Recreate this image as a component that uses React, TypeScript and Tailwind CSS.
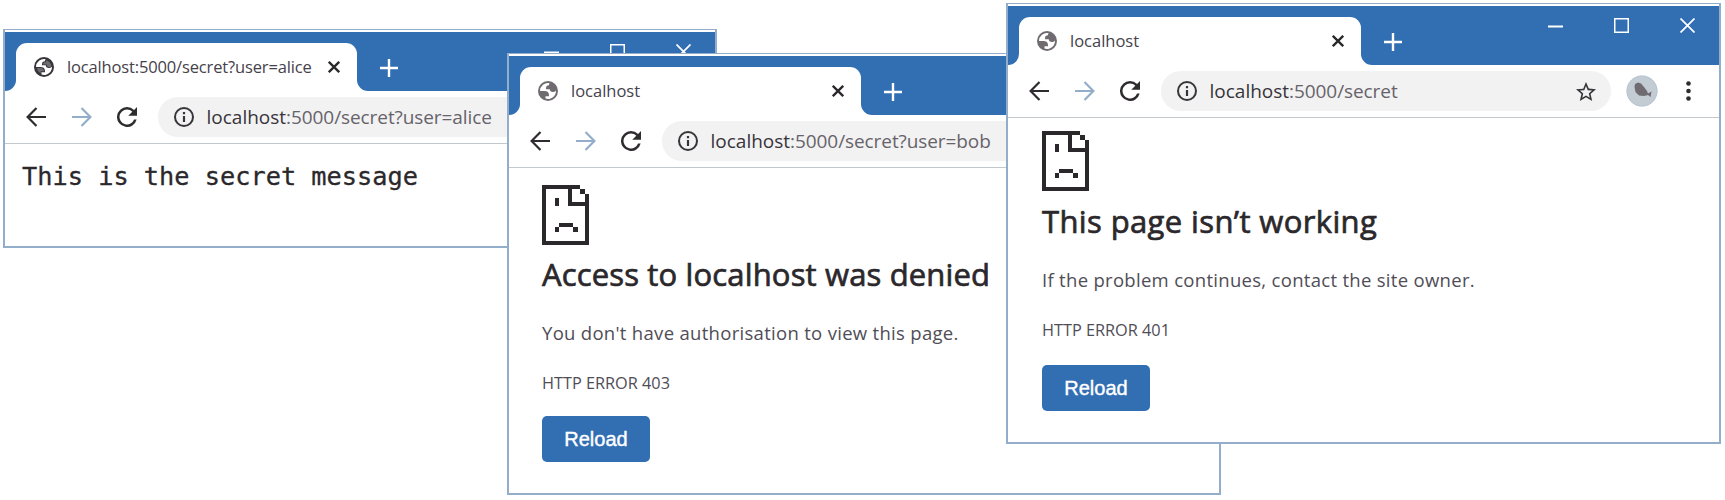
import React from "react";

const SANS = "font-['Open_Sans','Noto_Sans',sans-serif]";

function Globe({ dark }: { dark?: boolean }) {
  return (
    <svg viewBox="2 2 20 20" className={`h-5 w-5 shrink-0 ${dark ? "text-[#37343a]" : "text-[#6f6b71]"}`}>
      <circle cx="12" cy="12" r="10" fill="currentColor" />
      <path
        fill="#fff"
        d="M4 12h4.400c3.407.022 4.922 1.730 4.543 5.127H9.488v2.470a8.004 8.004 0 0 0 10.498-8.083C19.327 12.504 18.332 13 17 13c-2.137 0-3.206-.916-3.206-2.750h-3.748c-.274-2.728.683-4.092 2.870-4.092 0-.975.327-1.597.811-1.970A8.004 8.004 0 0 0 4 12z"
      />
      {dark && <path fill="#6f6b71" d="M14.500 5.200A8 8 0 0 1 19.500 11Q18.500 12.300 17 12.200Q14.800 12 14.600 9.500H11Q11 7 13.700 7ZM4.800 13H8.500Q12 13.200 12 16.300H8.700V18.500A8 8 0 0 1 4.800 13Z" />}
    </svg>
  );
}

function SadPage() {
  return (
    <svg viewBox="0 0 47 60" className="block h-[60px] w-[47px]" fill="#2b282c">
      <path d="M0 0H38V4H0ZM0 0H4V60H0ZM0 56H47V60H0ZM43 9H47V60H43ZM26 0H30V21H26ZM26 17H47V21H26ZM38 4H43V9H38ZM13 13H17V21H13ZM17 38H31V42H17ZM13 42H17V47H13ZM31 42H36V47H31Z" />
    </svg>
  );
}

function Back({ flip, className }: { flip?: boolean; className: string }) {
  return (
    <svg viewBox="0 0 20 20" className={`h-5 w-5 shrink-0 ${flip ? "-scale-x-100" : ""} ${className}`} fill="none" stroke="currentColor" strokeWidth="2.200">
      <path d="M20 10H2M10.500 1L1.600 10L10.500 19" />
    </svg>
  );
}

function Reload() {
  return (
    <svg viewBox="4 4 16 16" className="h-5 w-5 shrink-0 text-[#2f2c30]" fill="currentColor">
      <path d="M17.650 6.350A7.958 7.958 0 0 0 12 4a8 8 0 1 0 7.730 10h-2.080A6 6 0 1 1 12 6c1.660 0 3.140.690 4.220 1.780L13 11h7V4z" />
    </svg>
  );
}

function Info() {
  return (
    <svg viewBox="0 0 20 20" className="h-5 w-5 shrink-0 text-[#37343a]" fill="none" stroke="currentColor" strokeWidth="2">
      <circle cx="10" cy="10" r="9" />
      <path d="M10 9V15M10 5V7.200" strokeWidth="2.200" />
    </svg>
  );
}

type WindowProps = {
  place: string;
  tab: string;
  title: string;
  host: string;
  rest: string;
  dark?: boolean;
  children: React.ReactNode;
};

function BrowserWindow({ place, tab, title, host, rest, dark, children }: WindowProps) {
  return (
    <section className={`absolute flex flex-col border-2 border-t border-[#93aeca] bg-white ${place}`}>
      <header className="mt-[2px] flex h-[59px] shrink-0 bg-[#316eb2] text-white">
        <div className="flex w-[11px] shrink-0 items-end bg-white">
          <div className="h-full w-full rounded-br-[11px] bg-[#316eb2]" />
        </div>
        <div className={`flex shrink-0 flex-col bg-[#316eb2] pt-[11px] ${tab}`}>
          <div className="flex h-12 items-center rounded-t-[11px] bg-white pl-[18px] pr-[17px]">
            <Globe dark={dark} />
            <span className={`ml-[13px] grow whitespace-nowrap text-[16.500px] leading-6 text-[#45424b] ${dark ? "tracking-[-0.15px]" : ""} ${SANS}`}>{title}</span>
            <svg viewBox="0 0 12 12" className="h-3 w-3 shrink-0" stroke="#2b282c" strokeWidth="2.300">
              <path d="M.8 .8L11.200 11.200M11.200 .8L.8 11.200" />
            </svg>
          </div>
        </div>
        <div className="flex grow bg-white">
          <div className="flex grow justify-between rounded-bl-[11px] bg-[#316eb2] pl-[22.500px] pr-[24px]">
            <svg viewBox="0 0 18 18" className="mt-[26.500px] h-[18px] w-[18px]" stroke="currentColor" strokeWidth="2.400">
              <path d="M9 0V18M0 9H18" />
            </svg>
            <div className="mt-3 flex gap-[51px]">
              <svg viewBox="0 0 15 15" className="h-[15px] w-[15px]" stroke="currentColor" strokeWidth="2"><path d="M0 8.500H15" /></svg>
              <svg viewBox="0 0 15 15" className="h-[15px] w-[15px]" stroke="currentColor" strokeWidth="1.500" fill="none"><path d="M.75 .75H14.250V14.250H.75Z" /></svg>
              <svg viewBox="0 0 15 15" className="h-[15px] w-[15px]" stroke="currentColor" strokeWidth="1.700"><path d="M.5 .5L14.500 14.500M14.500 .5L.5 14.500" /></svg>
            </div>
          </div>
        </div>
      </header>
      <nav className="flex h-[53px] shrink-0 items-center border-b border-[#c3c8cc] pl-[20.500px] pr-[28px]">
        <Back className="text-[#2f2c30]" />
        <Back flip className="ml-[26px] text-[#93aeca]" />
        <div className="ml-[25.500px] flex"><Reload /></div>
        <div className="ml-[21px] flex h-10 grow items-center rounded-full bg-[#f2f2f2] pl-[15.500px] pr-[15.500px]">
          <Info />
          <span className={`ml-[13px] grow whitespace-nowrap text-[19px] leading-7 text-[#67636b] ${SANS}`}>
            <span className="text-[#37343a]">{host}</span><span className="tracking-[-0.08px]">{rest}</span>
          </span>
          <svg viewBox="2 2 20 19" className="h-[19px] w-5 shrink-0 text-[#37343a]" fill="currentColor">
            <path d="M22 9.240l-7.190-.620L12 2 9.190 8.630 2 9.240l5.460 4.730L5.820 21 12 17.270 18.180 21l-1.630-7.030L22 9.240zM12 15.400l-3.760 2.270 1-4.280-3.320-2.880 4.380-.380L12 6.100l1.710 4.040 4.380.380-3.320 2.880 1 4.280L12 15.400z" />
          </svg>
        </div>
        <svg viewBox="0 0 32 32" className="ml-[15px] h-8 w-8 shrink-0">
          <circle cx="16" cy="16" r="15.500" fill="#c3cbd3" />
          <circle cx="16" cy="16" r="15" fill="none" stroke="#a9bfd3" strokeDasharray="1 1" />
          <path d="M8.500 12L9 9L12 7.500L15 8.500L18 12L21 16L22 18.500L25.500 16.500L24.500 22L22 20L18 21L13 20.500L9.500 17Z" fill="#6f6b71" />
        </svg>
        <svg viewBox="0 0 5 20" className="ml-7 h-5 w-[5px] shrink-0" fill="#2f2c30">
          <circle cx="2.500" cy="2.500" r="2.300" /><circle cx="2.500" cy="10" r="2.300" /><circle cx="2.500" cy="17.500" r="2.300" />
        </svg>
      </nav>
      {children}
    </section>
  );
}

type ErrorProps = { heading: string; detail: string; code: string; pad: string; track: string; buttonGap: string };

function ErrorPage({ heading, detail, code, pad, track, buttonGap }: ErrorProps) {
  return (
    <main className={`flex flex-col items-start ${pad} ${SANS}`}>
      <SadPage />
      <h1 className={`mt-[8px] whitespace-nowrap text-[31px] leading-[42px] text-[#2b282c] [-webkit-text-stroke:0.7px_#2b282c] ${track}`}>{heading}</h1>
      <p className="mt-[24px] whitespace-nowrap text-[18.500px] leading-7 tracking-[0.3px] text-[#504d57]">{detail}</p>
      <p className="mt-[24px] whitespace-nowrap text-[16.300px] leading-6 text-[#504d57]">{code}</p>
      <button className={`h-[46px] w-[108px] rounded-[5px] bg-[#316eb2] font-['Liberation_Sans',Arial,sans-serif] text-[20px] text-white [-webkit-text-stroke:0.4px_white] ${buttonGap}`}>Reload</button>
    </main>
  );
}

export default function App() {
  return (
    <div className="relative h-[500px] w-[1725px] overflow-hidden bg-white">
      <BrowserWindow place="left-[3px] top-[29px] h-[219px] w-[714px]" tab="w-[341px]" title="localhost:5000/secret?user=alice" host="localhost" rest=":5000/secret?user=alice" dark>
        <pre className="pl-[17px] pt-[17px] font-['DejaVu_Sans_Mono',monospace] text-[25.300px] leading-8 text-[#2b282c] [-webkit-text-stroke:0.3px_#2b282c]">This is the secret message</pre>
      </BrowserWindow>
      <BrowserWindow place="left-[507px] top-[53px] h-[442px] w-[714px]" tab="w-[341px]" title="localhost" host="localhost" rest=":5000/secret?user=bob">
        <ErrorPage pad="pl-[33px] pt-[17px]" track="tracking-[0.15px]" buttonGap="mt-[21px]" heading="Access to localhost was denied" detail="You don't have authorisation to view this page." code="HTTP ERROR 403" />
      </BrowserWindow>
      <BrowserWindow place="left-[1006px] top-[3px] h-[441px] w-[715px]" tab="w-[342px]" title="localhost" host="localhost" rest=":5000/secret">
        <ErrorPage pad="pl-[34px] pt-[13px]" track="mt-[9px] tracking-[0.38px]" buttonGap="mt-[23px]" heading="This page isn’t working" detail="If the problem continues, contact the site owner." code="HTTP ERROR 401" />
      </BrowserWindow>
    </div>
  );
}
